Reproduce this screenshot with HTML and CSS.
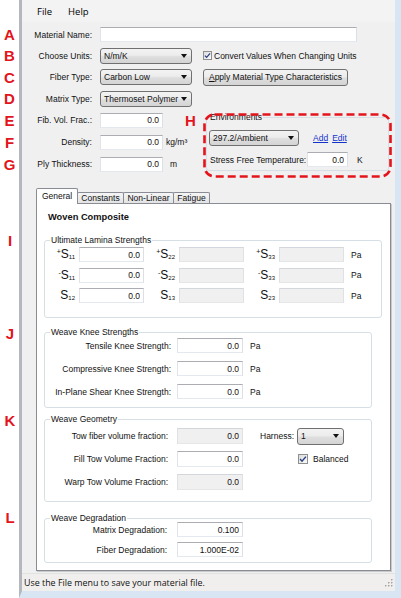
FILE: index.html
```html
<!DOCTYPE html>
<html lang="en">
<head>
<meta charset="utf-8">
<title>Material Editor</title>
<link rel="stylesheet" href="styles.css">
</head>
<body>
<div class="window">
  <nav class="menubar"><span class="menu-item">File</span><span class="menu-item">Help</span></nav>

  <div class="form">
    <div class="row"><span class="mark">A</span><label class="lbl">Material Name:</label><input class="tb tb-name" type="text" value=""></div>
    <div class="top">
      <div class="col-left">
        <div class="row"><span class="mark">B</span><label class="lbl">Choose Units:</label><div class="combo w92"><span>N/m/K</span><i class="caret"></i></div></div>
        <div class="row r22"><span class="mark">C</span><label class="lbl">Fiber Type:</label><div class="combo w92"><span>Carbon Low</span><i class="caret"></i></div></div>
        <div class="row"><span class="mark">D</span><label class="lbl">Matrix Type:</label><div class="combo w92"><span>Thermoset Polymer</span><i class="caret"></i></div></div>
        <div class="row r22"><span class="mark">E</span><label class="lbl">Fib. Vol. Frac.:</label><input class="tb w63" type="text" value="0.0"><span class="mark mark-h">H</span></div>
        <div class="row r22"><span class="mark">F</span><label class="lbl">Density:</label><input class="tb w63" type="text" value="0.0"><span class="unit">kg/m³</span></div>
        <div class="row r22"><span class="mark">G</span><label class="lbl">Ply Thickness:</label><input class="tb w63" type="text" value="0.0"><span class="unit unit-m">m</span></div>
      </div>
      <div class="col-right">
        <div class="row"><label class="check"><span class="cb"><svg viewBox="0 0 9 9" width="7" height="7"><path d="M1.2 4.6 L3.4 6.9 L7.8 1.8" fill="none" stroke="#2b3f82" stroke-width="1.6"/></svg></span>Convert Values When Changing Units</label></div>
        <div class="row r22"><button class="btn" type="button"><u>A</u>pply Material Type Characteristics</button></div>
        <div class="env">
          <fieldset class="gbox env-box">
            <legend>Environments</legend>
            <div class="env-row1"><div class="combo w90"><span>297.2/Ambient</span><i class="caret"></i></div><a class="link">Add</a><a class="link link2">Edit</a></div>
            <div class="env-row2"><label class="sft">Stress Free Temperature:</label><input class="tb w41" type="text" value="0.0"><span class="unit unit-k">K</span></div>
          </fieldset>
          <svg class="dash" width="189" height="65" viewBox="0 0 189 65"><rect x="1.5" y="1.5" width="186" height="62" rx="10" fill="none" stroke="#e3141b" stroke-width="2.6" stroke-dasharray="8 4"/></svg>
        </div>
      </div>
    </div>
  </div>

  <div class="tabs">
    <span class="tab active t-gen">General</span><span class="tab t-con">Constants</span><span class="tab t-nl">Non-Linear</span><span class="tab t-fat">Fatigue</span>
  </div>
  <div class="panel">
    <h2 class="title">Woven Composite</h2>

    <div class="grp g1">
      <span class="mark mark-abs">I</span>
      <fieldset class="gbox">
        <legend>Ultimate Lamina Strengths</legend>
        <div class="grid-s">
          <span class="s"><sup>+</sup>S<sub>11</sub></span><input class="tb" type="text" value="0.0">
          <span class="s"><sup>+</sup>S<sub>22</sub></span><input class="tb dis" type="text" value="">
          <span class="s"><sup>+</sup>S<sub>33</sub></span><input class="tb dis" type="text" value="">
          <span class="pa">Pa</span>
          <span class="s"><sup>-</sup>S<sub>11</sub></span><input class="tb" type="text" value="0.0">
          <span class="s"><sup>-</sup>S<sub>22</sub></span><input class="tb dis" type="text" value="">
          <span class="s"><sup>-</sup>S<sub>33</sub></span><input class="tb dis" type="text" value="">
          <span class="pa">Pa</span>
          <span class="s">S<sub>12</sub></span><input class="tb" type="text" value="0.0">
          <span class="s">S<sub>13</sub></span><input class="tb dis" type="text" value="">
          <span class="s">S<sub>23</sub></span><input class="tb dis" type="text" value="">
          <span class="pa">Pa</span>
        </div>
      </fieldset>
    </div>

    <div class="grp g2">
      <span class="mark mark-abs mk-j">J</span>
      <fieldset class="gbox">
        <legend>Weave Knee Strengths</legend>
        <div class="grid-k">
          <label class="fl">Tensile Knee Strength:</label><input class="tb" type="text" value="0.0"><span class="pa">Pa</span>
          <label class="fl">Compressive Knee Strength:</label><input class="tb" type="text" value="0.0"><span class="pa">Pa</span>
          <label class="fl">In-Plane Shear Knee Strength:</label><input class="tb" type="text" value="0.0"><span class="pa">Pa</span>
        </div>
      </fieldset>
    </div>

    <div class="grp g3">
      <span class="mark mark-abs mk-k">K</span>
      <fieldset class="gbox">
        <legend>Weave Geometry</legend>
        <div class="grid-g">
          <label class="fl c1">Tow fiber volume fraction:</label><input class="tb dis c2" type="text" value="0.0">
          <label class="c4">Harness:</label><div class="combo c6 harness"><span>1</span><i class="caret"></i></div>
          <label class="fl c1">Fill Tow Volume Fraction:</label><input class="tb c2" type="text" value="0.0">
          <label class="check c6 bal"><span class="cb cb10"><svg viewBox="0 0 9 9" width="8" height="8"><path d="M1.2 4.6 L3.4 6.9 L7.8 1.8" fill="none" stroke="#2b3f82" stroke-width="1.6"/></svg></span>Balanced</label>
          <label class="fl c1">Warp Tow Volume Fraction:</label><input class="tb dis c2" type="text" value="0.0">
        </div>
      </fieldset>
    </div>

    <div class="grp g4">
      <span class="mark mark-abs mk-l">L</span>
      <fieldset class="gbox">
        <legend>Weave Degradation</legend>
        <div class="grid-d">
          <label class="fl">Matrix Degradation:</label><input class="tb" type="text" value="0.100">
          <label class="fl">Fiber Degradation:</label><input class="tb" type="text" value="1.000E-02">
        </div>
      </fieldset>
    </div>
  </div>

  <footer class="status">
    <span>Use the File menu to save your material file.</span>
    <svg class="grip" width="10" height="10" viewBox="0 0 10 10">
      <g fill="#fff"><rect x="9" y="1" width="1" height="1"/><rect x="6" y="4" width="1" height="1"/><rect x="9" y="4" width="1" height="1"/><rect x="3" y="7" width="1" height="1"/><rect x="6" y="7" width="1" height="1"/><rect x="9" y="7" width="1" height="1"/></g>
      <g fill="#a2a2a2"><rect x="8" y="0" width="1.5" height="1.5"/><rect x="5" y="3" width="1.5" height="1.5"/><rect x="8" y="3" width="1.5" height="1.5"/><rect x="2" y="6" width="1.5" height="1.5"/><rect x="5" y="6" width="1.5" height="1.5"/><rect x="8" y="6" width="1.5" height="1.5"/></g>
    </svg>
  </footer>
</div>
</body>
</html>
```

FILE: styles.css
```css
* { box-sizing: border-box; }
html, body { margin: 0; padding: 0; }
body {
  width: 401px; height: 598px; overflow: hidden; background: #fff;
  font-family: "Liberation Sans", Arial, sans-serif; font-size: 8.5px; color: #111;
}

.window {
  margin-left: 19px; height: 598px;
  display: flex; flex-direction: column;
  background: #f0f0f0;
  border-left: 3px solid #b4b8bd;
  border-right: 6px solid #d8e5f2;
  border-bottom: 7px solid #d8e5f2;
}

.menubar {
  flex: none; height: 22px; display: flex; align-items: center; padding-left: 7px;
  font-family: "Open Sans", "Liberation Sans", sans-serif; font-size: 9.5px; color: #000;
  background: #f3f3f3;
}
.menu-item { padding: 0 8px; }

.form { flex: none; padding-top: 2px; }
.row { display: flex; align-items: center; height: 21px; }
.row.r22 { height: 22px; }

.mark {
  flex: none; width: 19px; margin-left: -22px; margin-right: 3px; text-align: center;
  font-family: "Liberation Sans", Arial, sans-serif; font-weight: bold; font-size: 15px;
  line-height: 11px; color: #e3141b;
}
.mark-h { width: auto; margin-left: 22px; margin-right: 0; }
.mark-abs { position: absolute; left: -44px; top: 0; width: 20px; margin: 0; }
.mk-j, .mk-k { top: 1px; }
.mk-l { top: -1px; }

.lbl { flex: none; width: 70px; margin-right: 8px; text-align: right; white-space: nowrap; }

.tb {
  display: block; flex: none; height: 15px; margin: 0; padding: 0 3px;
  border: 1px solid; border-color: #abadb3 #dbdfe6 #e3e9ef #e2e3ea;
  background: #fff; font: 8.5px "Liberation Sans", Arial, sans-serif; color: #111;
  text-align: right; outline: none;
}
.tb.dis { background: #f0f0f0; border-color: #d3d6da #dfe2e5 #e4e6e8 #dfe2e5; }
.tb-name { width: 257px; }
.w63 { width: 63px; }
.w41 { width: 41px; }

.unit { margin-left: 3px; white-space: nowrap; }
.unit-m { margin-left: 7px; }
.unit-k { margin-left: 9px; }

.top { display: flex; height: 130px; }
.col-left { flex: none; width: 170px; }
.col-right { flex: none; width: 192px; margin-left: 11px; }

.combo {
  flex: none; display: flex; align-items: center; justify-content: space-between;
  height: 16px; padding: 0 4px 0 3px;
  border: 1px solid #707070; border-radius: 3px;
  background: linear-gradient(#f3f3f3, #ececec 45%, #dedede 55%, #d4d4d4);
  white-space: nowrap; overflow: hidden; color: #111;
}
.w92 { width: 92px; }
.w90 { width: 90px; }
.caret {
  flex: none; width: 0; height: 0;
  border-left: 3.5px solid transparent; border-right: 3.5px solid transparent;
  border-top: 4px solid #111;
}

.check { display: flex; align-items: center; white-space: nowrap; }
.cb {
  flex: none; width: 9px; height: 9px; margin-right: 2px;
  display: flex; align-items: center; justify-content: center;
  border: 1px solid #8e8f8f; background: linear-gradient(135deg, #dcdcdc, #fbfbfb);
}
.cb10 { width: 10px; height: 10px; margin-right: 5px; }

.btn {
  flex: none; width: 145px; height: 17px; padding: 0;
  border: 1px solid #707070; border-radius: 3px;
  background: linear-gradient(#f3f3f3, #ececec 45%, #dedede 55%, #d4d4d4);
  font: 8.5px "Liberation Sans", Arial, sans-serif; color: #111; text-align: center;
}

.env { position: relative; width: 189px; height: 65px; margin-top: 25px; }
.dash { position: absolute; left: 0; top: 0; pointer-events: none; }

.gbox {
  margin: 0; padding: 0; min-width: 0;
  border: 1px solid #d5dfe5; border-radius: 3px;
}
.gbox legend { padding: 0 1px; margin-left: 5px; line-height: 10px; font-size: 8.5px; }
.env-box { margin: 3px 0 0 3px; width: 183px; height: 58px; }
.env-box legend { margin-left: 2px; line-height: 9px; }
.env-row1 { display: flex; align-items: center; height: 16px; margin-top: 8px; }
.env-row1 .combo { margin-left: 2px; }
.link { color: #1133cc; text-decoration: underline; margin-left: 14px; }
.link2 { margin-left: 4px; }
.env-row2 { display: flex; align-items: center; height: 15px; margin-top: 6px; }
.sft { flex: none; width: 97px; margin-left: 3px; white-space: nowrap; }

.tabs {
  flex: none; display: flex; align-items: flex-end; height: 15px;
  margin: 13px 0 0 14px; position: relative; z-index: 1;
}
.tab {
  flex: none; height: 11px; margin-left: -1px;
  border: 1px solid #898c95; border-bottom: 0; border-radius: 2px 2px 0 0;
  background: linear-gradient(#f5f5f5, #e3e3e3);
  text-align: center; line-height: 10px; white-space: nowrap;
}
.tab.active { height: 16px; margin-left: 0; margin-bottom: -1px; background: #fff; line-height: 14px; }
.t-gen { width: 42px; }
.t-con { width: 47px; }
.t-nl { width: 51px; }
.t-fat { width: 37px; }

.panel {
  flex: none; height: 368px; margin: 0 4px 0 14px;
  border: 1px solid #898c95; background: #fff;
  box-shadow: 1px 1px 0 #c9c9c9;
}
.title { margin: 8px 0 0 11px; font-size: 9.3px; font-weight: bold; line-height: 11px; color: #111; }

.grp { position: relative; margin-left: 7px; width: 328px; }
.g1 { margin-top: 12px; width: 338px; }
.g2 { margin-top: 9px; }
.g3 { margin-top: 6px; }
.g4 { margin-top: 11px; }

.grid-s {
  display: grid; grid-template-columns: 34px 65px 35px 65px 35px 65px auto;
  grid-auto-rows: 15px; row-gap: 5.5px; align-items: center; padding: 2px 0 14px;
}
.grid-s .tb, .grid-k .tb, .grid-g .tb, .grid-d .tb { width: 100%; height: 100%; }
.s { text-align: right; padding-right: 4px; font-size: 12px; line-height: 15px; white-space: nowrap; }
.s sup { font-size: 7px; line-height: 0; vertical-align: 4px; }
.s sub { font-size: 6px; line-height: 0; vertical-align: -1px; }
.pa { padding-left: 7px; }

.fl { text-align: right; white-space: nowrap; }
.grid-k {
  display: grid; grid-template-columns: 132px 66px auto;
  grid-auto-rows: 15px; row-gap: 8px; align-items: center; padding: 1px 0 8px;
}
.grid-k .fl { padding-right: 6px; }

.grid-g {
  display: grid; grid-template-columns: 132px 66px 17px 34px 3px 47px;
  grid-auto-rows: 16px; row-gap: 7px; align-items: center; padding: 4px 0 11px;
}
.grid-g .fl { padding-right: 9px; }
.c1 { grid-column: 1; }
.c2 { grid-column: 2; }
.c4 { grid-column: 4; white-space: nowrap; }
.c6 { grid-column: 6; }
.harness { width: 47px; height: 17px; }
.bal { margin-left: 1px; }

.grid-d {
  display: grid; grid-template-columns: 132px 66px;
  grid-auto-rows: 15px; row-gap: 5px; align-items: center; margin-top: -1px; padding-bottom: 5px;
}
.grid-d .fl { padding-right: 10px; }

.status {
  flex: none; height: 18px; margin-top: 2px; padding: 0 2px;
  display: flex; align-items: center; justify-content: space-between;
  background: #f0efed; border-top: 1px solid #e2e2e2;
  font-family: "Open Sans", "Liberation Sans", sans-serif; font-size: 8.9px; color: #111;
}
.grip { align-self: flex-end; margin-bottom: 2px; }
```
